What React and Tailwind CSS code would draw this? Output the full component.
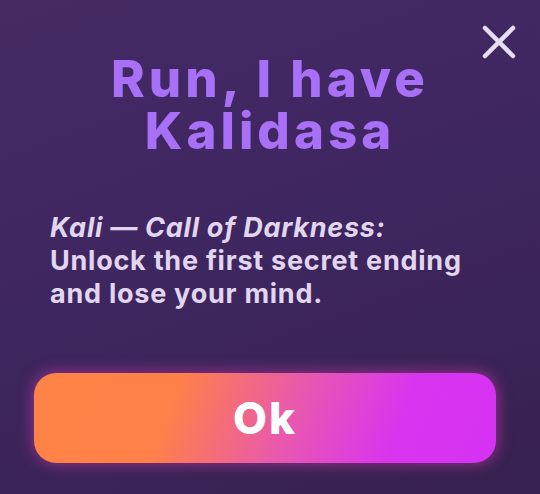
import React from "react";

export default function App() {
  return (
    <div
      className="w-[540px] h-[494px] overflow-hidden bg-[linear-gradient(160deg,#452a64_0%,#3e2660_50%,#37214f_100%)] flex flex-col"
      style={{ fontFamily: "Inter, 'Noto Sans', sans-serif" }}
    >
      <div className="flex justify-end pt-[25px] pr-[24px] h-[58px]">
        <svg width="34" height="34" viewBox="0 0 34 34" className="shrink-0">
          <path d="M3 3 L31 31 M31 3 L3 31" stroke="#e6def0" strokeWidth="4.5" strokeLinecap="round" />
        </svg>
      </div>
      <h1 className="flex flex-col items-center text-[#a870f6] font-extrabold text-[51px] leading-[52px] tracking-[4px] mt-[-5px]">
        <span className="block h-[52px]">Run, I have</span>
        <span className="block h-[52px]">Kalidasa</span>
      </h1>
      <div className="pl-[50px] pr-[10px] mt-[54px] text-[#e2d6ef] font-bold text-[27px] leading-[33px] tracking-[0.75px]">
        <div className="italic">Kali — Call of Darkness:</div>
        <div>Unlock the first secret ending</div>
        <div>and lose your mind.</div>
      </div>
      <div className="pl-[34px] mt-[63px]">
        <button className="w-[462px] h-[90px] rounded-[22px] bg-[linear-gradient(110deg,#ff8346_0%,#ff8048_30%,#e857b0_56%,#d934ef_78%,#d632f4_100%)] shadow-[0_0_14px_2px_rgba(220,60,180,0.5)] text-white font-extrabold text-[44px] tracking-[2px] flex items-center justify-center">
          Ok
        </button>
      </div>
    </div>
  );
}
